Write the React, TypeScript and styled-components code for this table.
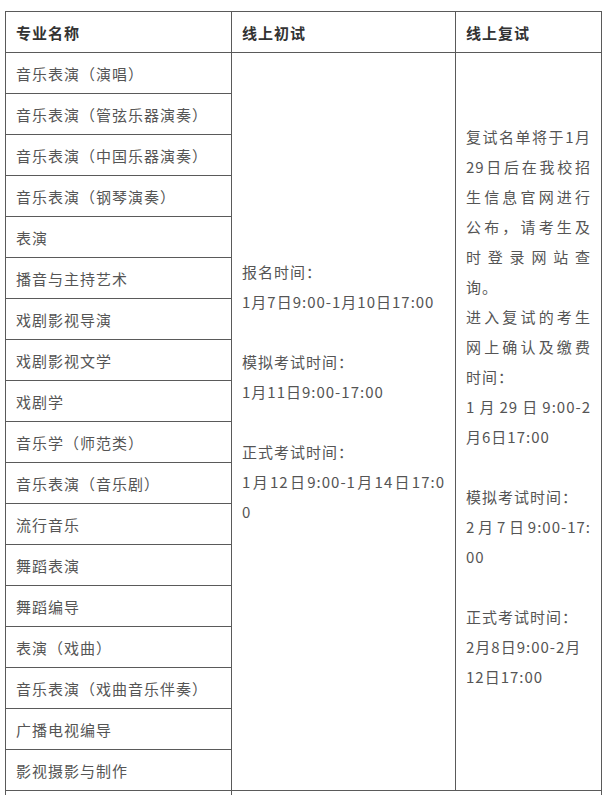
import React from "react";
import styled, { createGlobalStyle } from "styled-components";

const GlobalStyle = createGlobalStyle`
  html, body {
    margin: 0;
    padding: 0;
    background: #ffffff;
  }
  body {
    font-family: "Noto Sans CJK SC", "Noto Sans", sans-serif;
  }
`;

const Page = styled.div`
  padding: 11px 0 0 5px;
  width: 606px;
  box-sizing: border-box;
`;

const Table = styled.table`
  border-collapse: collapse;
  table-layout: fixed;
  width: 596px;
  font-size: 15px;
  letter-spacing: 1px;
  color: #555555;
`;

const HeadCell = styled.th`
  box-sizing: border-box;
  height: 41px;
  padding: 0 10px;
  border: 1px solid #5a5a5a;
  text-align: left;
  vertical-align: middle;
  font-weight: bold;
  color: #333333;
`;

const MajorCell = styled.td`
  box-sizing: border-box;
  height: 41px;
  padding: 0 10px;
  border: 1px solid #5a5a5a;
  vertical-align: middle;
  white-space: nowrap;
`;

const ScheduleCell = styled.td`
  padding: 0 10px;
  border: 1px solid #5a5a5a;
  vertical-align: middle;
`;

const Para = styled.div`
  margin: 0;
`;

const Line = styled.span<{ $stretch?: boolean }>`
  display: block;
  line-height: 30px;
  min-height: 30px;
  text-align: ${(p) => (p.$stretch ? "justify" : "left")};
  text-align-last: ${(p) => (p.$stretch ? "justify" : "auto")};
`;

type L = { t: string; s?: boolean };

const majors = [
  "音乐表演（演唱）",
  "音乐表演（管弦乐器演奏）",
  "音乐表演（中国乐器演奏）",
  "音乐表演（钢琴演奏）",
  "表演",
  "播音与主持艺术",
  "戏剧影视导演",
  "戏剧影视文学",
  "戏剧学",
  "音乐学（师范类）",
  "音乐表演（音乐剧）",
  "流行音乐",
  "舞蹈表演",
  "舞蹈编导",
  "表演（戏曲）",
  "音乐表演（戏曲音乐伴奏）",
  "广播电视编导",
  "影视摄影与制作",
];

const firstRound: L[][] = [
  [{ t: "报名时间：" }],
  [{ t: "1月7日9:00-1月10日17:00" }],
  [{ t: "" }],
  [{ t: "模拟考试时间：" }],
  [{ t: "1月11日9:00-17:00" }],
  [{ t: "" }],
  [{ t: "正式考试时间：" }],
  [{ t: "1月12日9:00-1月14日17:0", s: true }, { t: "0" }],
  [{ t: "" }],
  [{ t: "" }],
];

const secondRound: L[][] = [
  [
    { t: "复试名单将于1月", s: true },
    { t: "29日后在我校招", s: true },
    { t: "生信息官网进行", s: true },
    { t: "公布，请考生及", s: true },
    { t: "时登录网站查", s: true },
    { t: "询。" },
  ],
  [
    { t: "进入复试的考生", s: true },
    { t: "网上确认及缴费", s: true },
    { t: "时间：" },
  ],
  [{ t: "1月29日9:00-2", s: true }, { t: "月6日17:00" }],
  [{ t: "" }],
  [{ t: "模拟考试时间：" }],
  [{ t: "2月7日9:00-17:", s: true }, { t: "00" }],
  [{ t: "" }],
  [{ t: "正式考试时间：" }],
  [{ t: "2月8日9:00-2月" }, { t: "12日17:00" }],
  [{ t: "" }],
];

const renderParas = (paras: L[][]) =>
  paras.map((p, i) => (
    <Para key={i}>
      {p.map((l, j) => (
        <Line key={j} $stretch={l.s}>
          {l.t || "\u00a0"}
        </Line>
      ))}
    </Para>
  ));

export default function App() {
  return (
    <>
      <GlobalStyle />
      <Page>
        <Table>
          <colgroup>
            <col style={{ width: 226 }} />
            <col style={{ width: 224 }} />
            <col style={{ width: 146 }} />
          </colgroup>
          <thead>
            <tr>
              <HeadCell>专业名称</HeadCell>
              <HeadCell>线上初试</HeadCell>
              <HeadCell>线上复试</HeadCell>
            </tr>
          </thead>
          <tbody>
            {majors.map((m, i) => (
              <tr key={m}>
                <MajorCell>{m}</MajorCell>
                {i === 0 && (
                  <>
                    <ScheduleCell rowSpan={majors.length}>
                      {renderParas(firstRound)}
                    </ScheduleCell>
                    <ScheduleCell rowSpan={majors.length}>
                      {renderParas(secondRound)}
                    </ScheduleCell>
                  </>
                )}
              </tr>
            ))}
            <tr>
              <MajorCell>{"\u00a0"}</MajorCell>
              <ScheduleCell colSpan={2}>{"\u00a0"}</ScheduleCell>
            </tr>
          </tbody>
        </Table>
      </Page>
    </>
  );
}
